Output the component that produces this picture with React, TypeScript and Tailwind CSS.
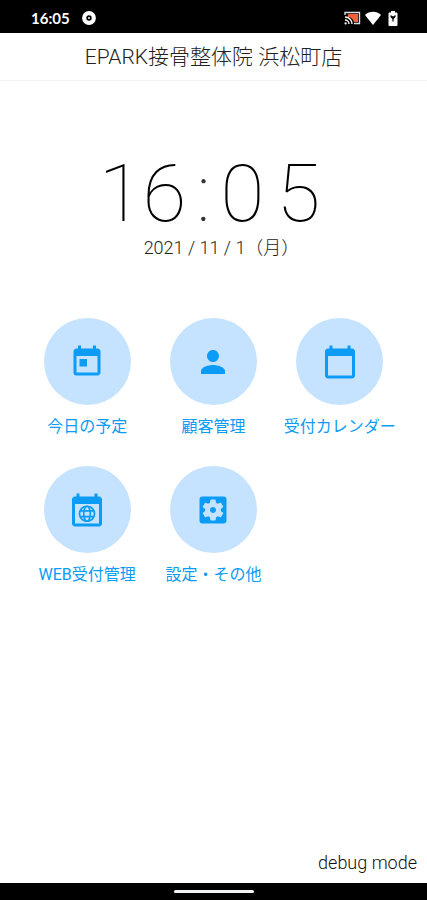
import type { ReactNode } from 'react'
import { MdCalendarToday, MdPerson, MdSettingsApplications, MdToday } from 'react-icons/md'

type MenuItem = {
  label: string
  icon: ReactNode
}

function WebCalendarIcon() {
  return (
    <svg viewBox="0 0 24 24" className="size-9" fill="currentColor" aria-hidden="true">
      <path d="M20 3h-1V1h-2v2H7V1H5v2H4c-1.1 0-2 .9-2 2v16c0 1.1.9 2 2 2h16c1.1 0 2-.9 2-2V5c0-1.1-.9-2-2-2zm0 18H4V8h16v13z" />
      <g fill="none" stroke="currentColor" strokeWidth="1.100">
        <circle cx="12" cy="14.5" r="5" />
        <ellipse cx="12" cy="14.5" rx="2.2" ry="5" />
        <path d="M7.4 12.6h9.2M7.4 16.4h9.2" />
      </g>
    </svg>
  )
}

const menuItems: MenuItem[] = [
  { label: '今日の予定', icon: <MdToday className="size-9" /> },
  { label: '顧客管理', icon: <MdPerson className="size-9" /> },
  { label: '受付カレンダー', icon: <MdCalendarToday className="size-9" /> },
  { label: 'WEB受付管理', icon: <WebCalendarIcon /> },
  { label: '設定・その他', icon: <MdSettingsApplications className="size-9" /> },
]

function StatusBar() {
  return (
    <div className="flex h-[33px] items-center justify-between bg-black pr-[26px] pl-[31px] text-white">
      <div className="flex items-center gap-3 pt-[2px]">
        <span className="font-['Lato',sans-serif] text-[15px] leading-5 font-bold">16:05</span>
        <svg viewBox="0 0 14 14" className="size-[14px]" aria-hidden="true">
          <circle cx="7" cy="7" r="4.8" fill="none" stroke="currentColor" strokeWidth="4.2" />
          <circle cx="7" cy="7" r="1" fill="currentColor" />
        </svg>
      </div>
      <div className="flex items-center gap-1 pt-[2px]">
        {/* Cast */}
        <svg viewBox="0 0 17 14" className="h-[14px] w-[17px]" fill="none" aria-hidden="true">
          <path d="M4 3h10v8H10C9 8 7 6 4 6z" fill="#f4603a" />
          <path d="M1 4V1.500h14.500v11H10" stroke="#ddd" strokeWidth="1.400" />
          <path d="M1 6a7 7 0 0 1 7 7M1 9a4 4 0 0 1 4 4" stroke="#fff" strokeWidth="1.400" />
          <circle cx="1.600" cy="12.400" r="1.100" fill="#fff" />
        </svg>
        {/* Wi-Fi */}
        <svg viewBox="0 0 16 14" className="h-[14px] w-4" fill="currentColor" aria-hidden="true">
          <path d="M0 4C4.500 -.2 11.500 -.2 16 4L8 14z" />
        </svg>
        {/* Battery */}
        <svg viewBox="0 0 16 16" className="size-4" aria-hidden="true">
          <path d="M6 1h4v1.500h1.500a1 1 0 0 1 1 1V15a1 1 0 0 1-1 1h-7a1 1 0 0 1-1-1V3.500a1 1 0 0 1 1-1H6z" fill="currentColor" />
          <path d="M5.500 5l2.500 1.500L10.500 5v2L8.600 9v2.500H7.400V9L5.500 7z" fill="#000" />
        </svg>
      </div>
    </div>
  )
}

function Clock() {
  return (
    <section className="flex flex-col items-center pt-[73px]">
      <time dateTime="16:05" className="flex gap-[10px] pr-2 text-[80px] leading-[80px] font-thin text-black">
        <span>16</span>
        <span className="text-[#333]">:</span>
        <span className="flex gap-3">
          <span>0</span>
          <span>5</span>
        </span>
      </time>
      <time dateTime="2021-11-01" className="pl-4 text-lg leading-7 font-light text-[#222]">
        2021 / 11 / 1（月）
      </time>
    </section>
  )
}

export default function App() {
  return (
    <div className="flex min-h-screen flex-col bg-white font-['Roboto','Noto_Sans_CJK_JP',sans-serif]">
      <StatusBar />
      <header className="flex h-12 items-center justify-center border-b border-gray-100">
        <h1 className="text-[21px] leading-7 font-light text-[#222]">EPARK接骨整体院 浜松町店</h1>
      </header>

      <main className="flex flex-1 flex-col">
        <Clock />
        <nav className="mt-14 grid grid-cols-3 gap-y-[27px] px-6">
          {menuItems.map((item) => (
            <button key={item.label} type="button" className="flex flex-col items-center gap-[10px] text-[#0c9bf5]">
              <span className="flex size-[87px] items-center justify-center rounded-full bg-[#c5e2ff]">{item.icon}</span>
              <span className="leading-6 whitespace-nowrap">{item.label}</span>
            </button>
          ))}
        </nav>
        <p className="mt-auto px-[10px] pb-2 text-right text-lg leading-6 font-light text-[#111]">debug mode</p>
      </main>

      <footer className="flex h-[17px] items-center justify-center bg-black">
        <span className="h-[3px] w-20 rounded-full bg-gray-100" />
      </footer>
    </div>
  )
}
